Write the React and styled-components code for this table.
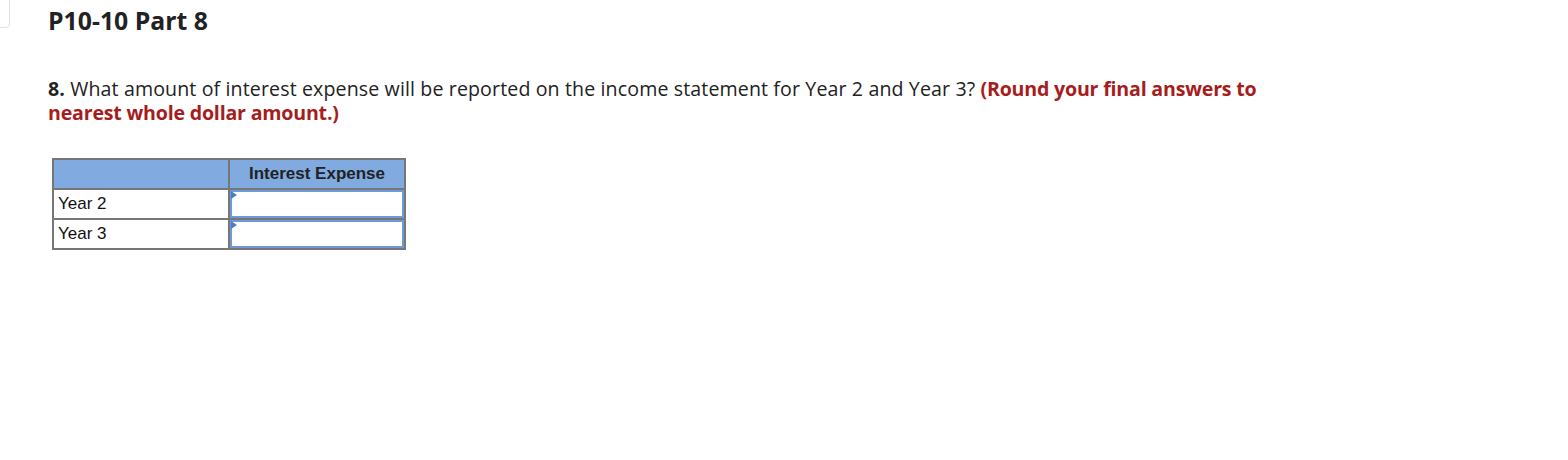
import React from "react";
import styled, { createGlobalStyle } from "styled-components";

const GlobalStyle = createGlobalStyle`
  body {
    margin: 0;
    background: #fff;
    font-family: "Open Sans", "Lato", sans-serif;
    color: #222;
  }
`;

const Page = styled.div`
  position: relative;
  padding: 5px 0 0 48px;
  height: 455px;
`;

const CornerTab = styled.div`
  position: absolute;
  left: -6px;
  top: -6px;
  width: 14px;
  height: 32px;
  border: 1px solid #e3e3e3;
  border-radius: 4px;
`;

const Title = styled.h1`
  margin: 0;
  font-size: 24.8px;
  line-height: 30px;
  font-weight: 700;
  color: #222;
`;

const Question = styled.p`
  margin: 42px 0 0;
  width: 1225px;
  font-size: 19.6px;
  line-height: 24px;
  letter-spacing: 0.12px;
  color: #222;

  b {
    font-weight: 700;
  }
`;

const Hint = styled.strong`
  color: #a51d1d;
  font-weight: 700;
  letter-spacing: -0.2px;
`;

const Table = styled.table`
  margin: 33px 0 0 4px;
  border-collapse: collapse;
  border: 2px solid #777;
  font-family: "Liberation Sans", Arial, sans-serif;
  font-size: 17px;
`;

const Head = styled.th`
  background: #80aae0;
  border: 2px solid #777;
  height: 28px;
  width: 174px;
  padding: 0;
  font-weight: 700;
  color: #222;
  text-align: center;
`;

const Label = styled.td`
  border: 2px solid #777;
  height: 28px;
  padding: 0 0 0 4px;
  color: #111;
`;

const InputCell = styled.td`
  border: 2px solid #777;
  padding: 0;
  height: 28px;
`;

const Field = styled.div`
  position: relative;
  height: 28px;
  box-sizing: border-box;
  border: 2px solid #6e9bd8;
  background: #fff;

  &::before {
    content: "";
    position: absolute;
    left: -1px;
    top: -1px;
    border-top: 4px solid transparent;
    border-bottom: 4px solid transparent;
    border-left: 6px solid #4a7dc8;
  }
`;

const rows = ["Year 2", "Year 3"];

export default function App() {
  return (
    <>
      <GlobalStyle />
      <Page>
        <CornerTab />
        <Title>P10-10 Part 8</Title>
        <Question>
          <b>8.</b> What amount of interest expense will be reported on the income
          statement for Year 2 and Year 3?{" "}
          <Hint>(Round your final answers to nearest whole dollar amount.)</Hint>
        </Question>
        <Table>
          <thead>
            <tr>
              <Head />
              <Head>Interest Expense</Head>
            </tr>
          </thead>
          <tbody>
            {rows.map((r) => (
              <tr key={r}>
                <Label>{r}</Label>
                <InputCell>
                  <Field />
                </InputCell>
              </tr>
            ))}
          </tbody>
        </Table>
      </Page>
    </>
  );
}
